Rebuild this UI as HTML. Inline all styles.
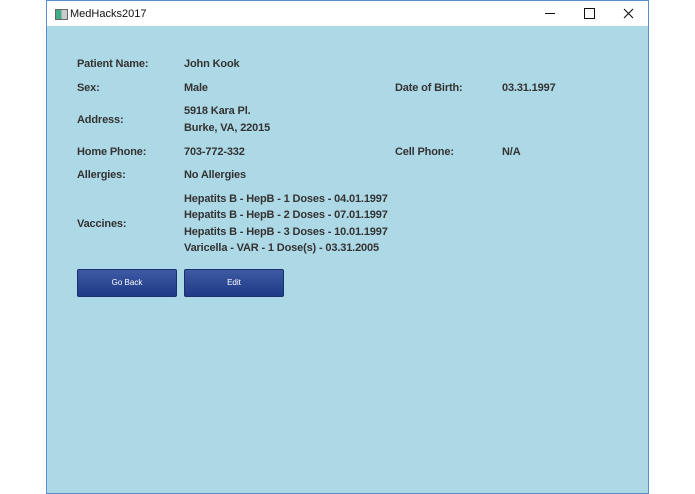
<!DOCTYPE html>
<html><head><style>
body{margin:0;width:695px;height:494px;background:#fff;position:relative;overflow:hidden;font-family:"Liberation Sans",sans-serif}
.win{position:absolute;left:46px;top:0;width:601px;height:492px;border:1px solid #5a8fcf;background:#add8e6}
.tb{position:absolute;left:0;top:0;right:0;height:25px;background:#fff}
.t{position:absolute;font-size:11px;font-weight:bold;color:#333;white-space:nowrap;line-height:14px;letter-spacing:-0.15px}
.btn{position:absolute;width:98px;height:26px;border:1px solid #1b2f6a;border-radius:2px;background:linear-gradient(#3d5aa3,#1f3a86);color:#fff;font-size:8px;text-align:center;line-height:26px}
</style></head><body>
<div class="win">
<div class="tb">
<div style="position:absolute;left:8px;top:8px;width:11px;height:9px;border:1px solid #666;background:linear-gradient(90deg,#4a8 0,#4a8 50%,#ccc 50%)"></div>
<div style="position:absolute;left:23px;top:7px;font-size:11px;color:#111">MedHacks2017</div>
<div style="position:absolute;left:498px;top:12px;width:10px;height:1px;background:#111"></div>
<div style="position:absolute;left:537px;top:7px;width:9px;height:9px;border:1px solid #111"></div>
<svg style="position:absolute;left:576px;top:7px" width="11" height="11"><path d="M1 1L10 10M10 1L1 10" stroke="#111" stroke-width="1.1"/></svg>
</div>
</div>
<div class="t" style="left:77px;top:57px">Patient Name:</div>
<div class="t" style="left:184px;top:57px">John Kook</div>
<div class="t" style="left:77px;top:81px">Sex:</div>
<div class="t" style="left:184px;top:81px">Male</div>
<div class="t" style="left:395px;top:81px">Date of Birth:</div>
<div class="t" style="left:502px;top:81px">03.31.1997</div>
<div class="t" style="left:77px;top:113px">Address:</div>
<div class="t" style="left:184px;top:104px">5918 Kara Pl.</div>
<div class="t" style="left:184px;top:121px">Burke, VA, 22015</div>
<div class="t" style="left:77px;top:145px">Home Phone:</div>
<div class="t" style="left:184px;top:145px">703-772-332</div>
<div class="t" style="left:395px;top:145px">Cell Phone:</div>
<div class="t" style="left:502px;top:145px">N/A</div>
<div class="t" style="left:77px;top:168px">Allergies:</div>
<div class="t" style="left:184px;top:168px">No Allergies</div>
<div class="t" style="left:77px;top:217px">Vaccines:</div>
<div class="t" style="left:184px;top:192px">Hepatits B - HepB - 1 Doses - 04.01.1997</div>
<div class="t" style="left:184px;top:208px">Hepatits B - HepB - 2 Doses - 07.01.1997</div>
<div class="t" style="left:184px;top:225px">Hepatits B - HepB - 3 Doses - 10.01.1997</div>
<div class="t" style="left:184px;top:241px">Varicella - VAR - 1 Dose(s) - 03.31.2005</div>
<div class="btn" style="left:77px;top:269px">Go Back</div>
<div class="btn" style="left:184px;top:269px">Edit</div>
</body></html>
